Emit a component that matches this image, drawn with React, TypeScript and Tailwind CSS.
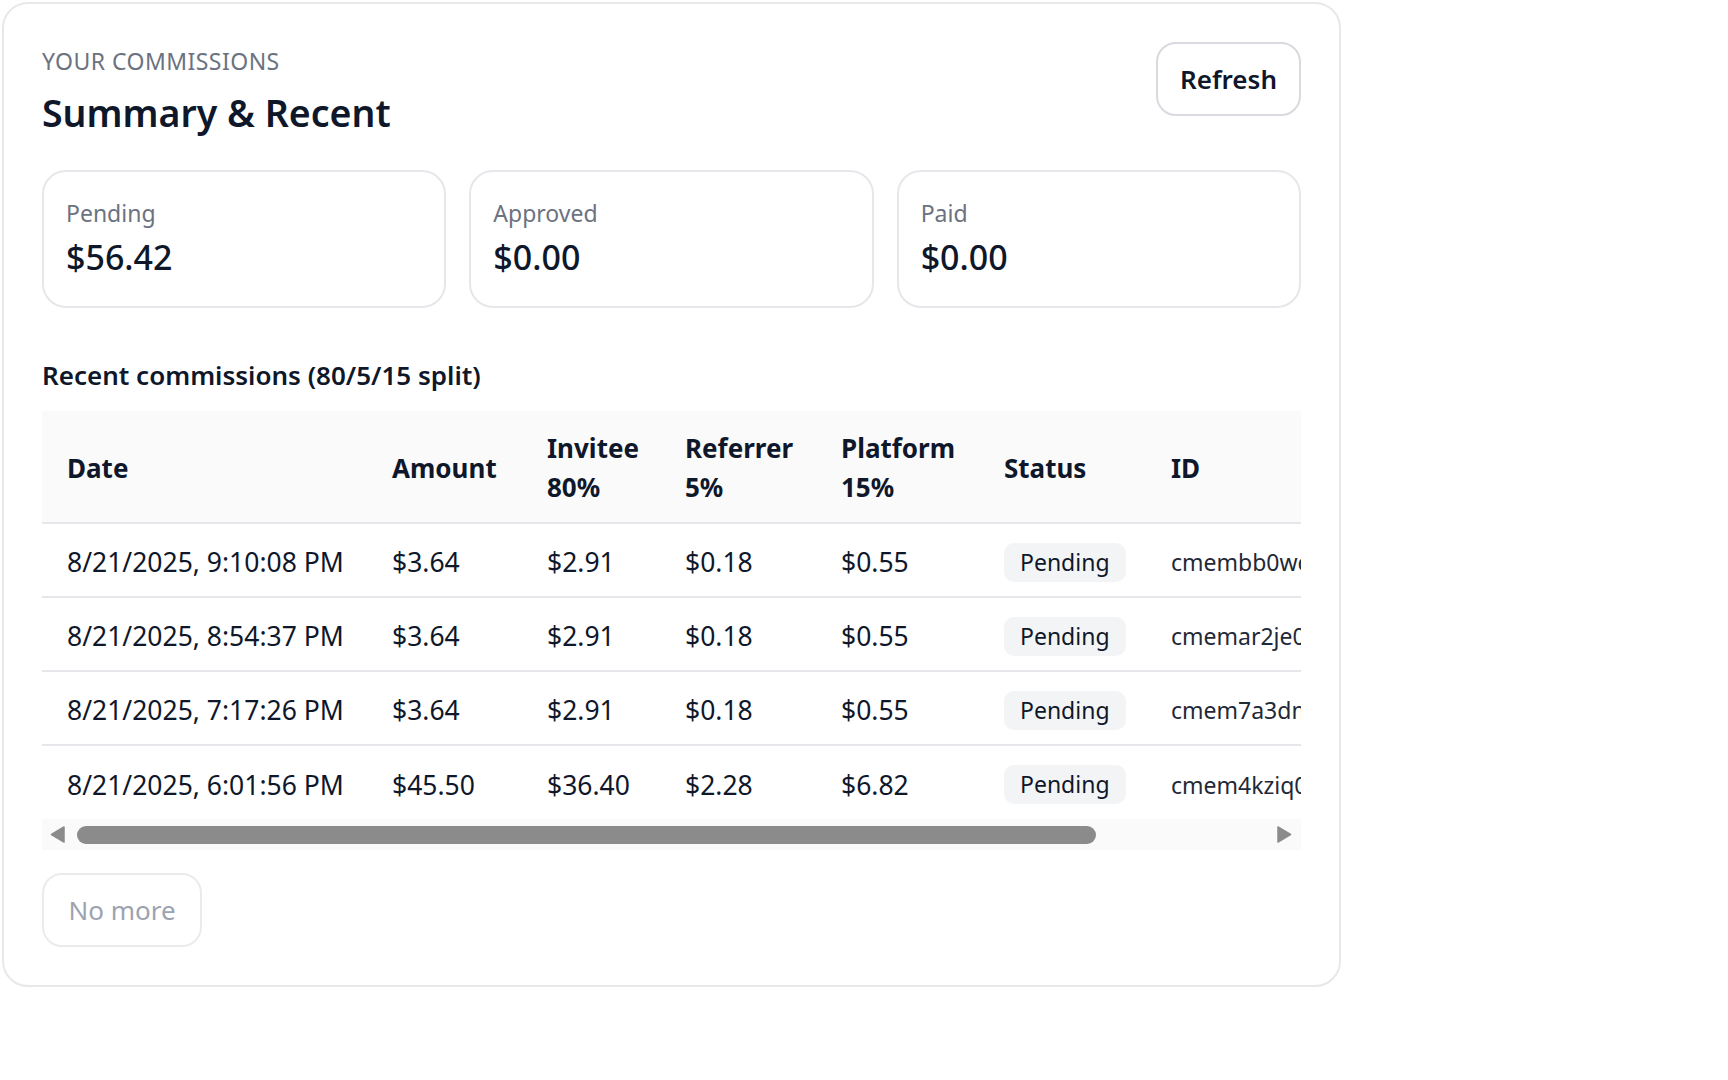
import React from 'react';

type Commission = {
  date: string;
  amount: string;
  invitee: string;
  referrer: string;
  platform: string;
  status: string;
  id: string;
};

const commissions: Commission[] = [
  { date: '8/21/2025, 9:10:08 PM', amount: '$3.64', invitee: '$2.91', referrer: '$0.18', platform: '$0.55', status: 'Pending', id: 'cmembb0wc0007l204q9h3x1ve' },
  { date: '8/21/2025, 8:54:37 PM', amount: '$3.64', invitee: '$2.91', referrer: '$0.18', platform: '$0.55', status: 'Pending', id: 'cmemar2je0003l204bz8k6m2p' },
  { date: '8/21/2025, 7:17:26 PM', amount: '$3.64', invitee: '$2.91', referrer: '$0.18', platform: '$0.55', status: 'Pending', id: 'cmem7a3dm0005jx04n7c2w9sa' },
  { date: '8/21/2025, 6:01:56 PM', amount: '$45.50', invitee: '$36.40', referrer: '$2.28', platform: '$6.82', status: 'Pending', id: 'cmem4kziq0001jx04f5t8r0du' },
];

const stats = [
  { label: 'Pending', value: '$56.42' },
  { label: 'Approved', value: '$0.00' },
  { label: 'Paid', value: '$0.00' },
];

function StatCard({ label, value }: { label: string; value: string }) {
  return (
    <div className="h-[138px] rounded-[24px] border-2 border-[#e6e7ea] pl-[22px] pt-[25px]">
      <div className="text-[23px] leading-[33px] text-[#6b7280]">{label}</div>
      <div className="mt-[4px] text-[34px] leading-[46px] font-medium text-[#0f172a]">{value}</div>
    </div>
  );
}

function ScrollBar() {
  return (
    <div className="flex h-[31px] items-center bg-[#fafafa]">
      <div className="w-[35px] pl-[8px]">
        <svg width="15" height="17" viewBox="0 0 15 17" className="block">
          <path d="M14 1 L1.5 8.5 L14 16 Z" fill="#8b8b8b" stroke="#8b8b8b" strokeWidth="1.5" strokeLinejoin="round" />
        </svg>
      </div>
      <div className="h-[18px] w-[1019px] rounded-full bg-[#8b8b8b]" />
      <div className="flex-1" />
      <div className="w-[31px] pl-[7px]">
        <svg width="15" height="17" viewBox="0 0 15 17" className="block">
          <path d="M1 1 L13.5 8.5 L1 16 Z" fill="#8b8b8b" stroke="#8b8b8b" strokeWidth="1.5" strokeLinejoin="round" />
        </svg>
      </div>
    </div>
  );
}

export default function App() {
  const th = 'h-[112px] px-[25px] pt-[3px] align-middle text-[26px] leading-[39px] font-bold';
  const td = 'h-[74px] px-[25px] pt-[4px] align-middle text-[26.5px] leading-[40px] whitespace-nowrap';

  return (
    <div className="min-h-screen bg-white p-[2px] font-['Noto_Sans',sans-serif] text-[#0f172a]">
      <div className="w-[1339px] rounded-[26px] border-2 border-[#e8e8e8] px-[38px] py-[38px]">
        {/* header */}
        <div className="flex h-[128px] items-start justify-between">
          <div>
            <div className="mt-[3px] text-[23px] leading-[33px] uppercase tracking-[0.02em] text-[#6b7280]">
              Your commissions
            </div>
            <h2 className="mt-[8px] text-[37.5px] leading-[53px] font-semibold">Summary &amp; Recent</h2>
          </div>
          <button
            type="button"
            className="h-[74px] w-[145px] rounded-[20px] border-2 border-[#d9dadf] bg-white text-[26px] font-semibold text-[#0f172a]"
          >
            Refresh
          </button>
        </div>

        <div className="grid grid-cols-3 gap-[23px]">
          {stats.map((s) => (
            <StatCard key={s.label} label={s.label} value={s.value} />
          ))}
        </div>

        <h3 className="mt-[49px] text-[26px] leading-[36px] font-semibold">Recent commissions (80/5/15 split)</h3>

        <div className="mt-[18px]">
          <div className="overflow-x-hidden">
            <table className="w-[1464px] table-fixed border-collapse text-left">
              <colgroup>
                <col className="w-[325px]" />
                <col className="w-[155px]" />
                <col className="w-[138px]" />
                <col className="w-[156px]" />
                <col className="w-[163px]" />
                <col className="w-[167px]" />
                <col className="w-[360px]" />
              </colgroup>
              <thead>
                <tr className="border-b-2 border-[#e6e7ea] bg-[#fafafa]">
                  <th className={th}>Date</th>
                  <th className={th}>Amount</th>
                  <th className={th}>
                    <span className="block">Invitee</span>
                    <span className="block">80%</span>
                  </th>
                  <th className={th}>
                    <span className="block">Referrer</span>
                    <span className="block">5%</span>
                  </th>
                  <th className={th}>
                    <span className="block">Platform</span>
                    <span className="block">15%</span>
                  </th>
                  <th className={th}>Status</th>
                  <th className={th}>ID</th>
                </tr>
              </thead>
              <tbody>
                {commissions.map((c, i) => (
                  <tr key={c.id} className={i < commissions.length - 1 ? 'border-b-2 border-[#e6e7ea]' : ''}>
                    <td className={td}>{c.date}</td>
                    <td className={td}>{c.amount}</td>
                    <td className={td}>{c.invitee}</td>
                    <td className={td}>{c.referrer}</td>
                    <td className={td}>{c.platform}</td>
                    <td className="h-[74px] px-[25px] pt-[4px] align-middle whitespace-nowrap">
                      <span className="inline-block rounded-[10px] bg-[#f3f4f6] px-[16px] text-[23px] leading-[39px]">
                        {c.status}
                      </span>
                    </td>
                    <td className="h-[74px] px-[25px] pt-[4px] align-middle text-[23px] leading-[40px] whitespace-nowrap text-[#1f2937]">
                      {c.id}
                    </td>
                  </tr>
                ))}
              </tbody>
            </table>
          </div>
          <ScrollBar />
        </div>

        <button
          type="button"
          disabled
          className="mt-[23px] h-[74px] w-[160px] rounded-[20px] border-2 border-[#ebebeb] bg-white text-[26px] text-[#9ca3af]"
        >
          No more
        </button>
      </div>
    </div>
  );
}
